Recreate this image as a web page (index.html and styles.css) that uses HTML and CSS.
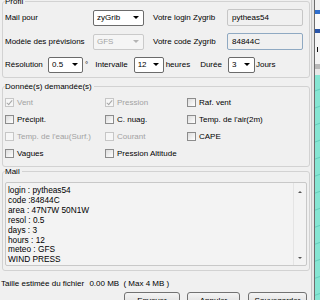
FILE: index.html
```html
<!DOCTYPE html>
<html lang="fr">
<head>
  <meta charset="UTF-8" />
  <title>Mail zyGrib</title>
  <link rel="stylesheet" href="styles.css">
</head>
<body>
  <div class="screen">
    <div class="dialog">
      <fieldset class="group profil">
        <legend>Profil</legend>
        <div class="profil-grid">
          <span>Mail pour</span>
          <div class="combo"><span>zyGrib</span><i class="arrow"></i></div>
          <span class="label2">Votre login Zygrib</span>
          <div class="field">pytheas54</div>

          <span>Modèle des prévisions</span>
          <div class="combo disabled"><span>GFS</span><i class="arrow"></i></div>
          <span class="label2">Votre code Zygrib</span>
          <div class="field focus">84844C</div>
        </div>
        <div class="timing">
          <span class="t-res">Résolution</span>
          <div class="combo c-res"><span>0.5</span><i class="arrow"></i></div>
          <span class="t-deg">°</span>
          <span class="t-int">Intervalle</span>
          <div class="combo c-int"><span>12</span><i class="arrow"></i></div>
          <span class="t-h">heures</span>
          <span class="t-dur">Durée</span>
          <div class="combo c-dur"><span>3</span><i class="arrow"></i></div>
          <span class="t-j">Jours</span>
        </div>
      </fieldset>

      <fieldset class="group data">
        <legend>Donnée(s) demandée(s)</legend>
        <div class="checks">
          <label class="check off"><i class="box on"></i>Vent</label>
          <label class="check off"><i class="box on"></i>Pression</label>
          <label class="check"><i class="box"></i>Raf. vent</label>

          <label class="check"><i class="box"></i>Précipit.</label>
          <label class="check"><i class="box"></i>C. nuag.</label>
          <label class="check"><i class="box"></i>Temp. de l'air(2m)</label>

          <label class="check off"><i class="box"></i>Temp. de l'eau(Surf.)</label>
          <label class="check off"><i class="box"></i>Courant</label>
          <label class="check"><i class="box"></i>CAPE</label>

          <label class="check"><i class="box"></i>Vagues</label>
          <label class="check wide"><i class="box"></i>Pression Altitude</label>
        </div>
      </fieldset>

      <fieldset class="group mail">
        <legend>Mail</legend>
        <div class="mailbox">
          <div class="mail-text">login : pytheas54
code :84844C
area : 47N7W 50N1W
resol : 0.5
days : 3
hours : 12
meteo : GFS
WIND PRESS</div>
          <div class="scroll"><i class="up"></i><i class="down"></i></div>
        </div>
      </fieldset>

      <div class="size-line">
        <span>Taille estimée du fichier</span>
        <span class="size-mb">0.00 MB</span>
        <span class="size-max">( Max 4 MB )</span>
      </div>

      <div class="buttons">
        <button class="b1">Envoyer</button>
        <button class="b2">Annuler</button>
        <button class="b3">Sauvegarder</button>
      </div>
    </div>

    <div class="frame"></div>

    <div class="map">
      <div class="m-top"></div>
      <div class="m-blue"></div>
      <div class="m-white"></div>
      <div class="m-navy"></div>
      <div class="m-light"></div>
      <div class="m-text"></div>
      <div class="m-light2"></div>
      <div class="m-grey"></div>
      <div class="m-light3"></div>
      <div class="sea"></div>
    </div>
  </div>
</body>
</html>
```

FILE: styles.css
```css
* {
  box-sizing: border-box;
}
html, body {
  margin: 0;
  height: 100%;
  overflow: hidden;
}
body {
  background: #f0f0f0;
  font-family: "Liberation Sans", Arial, sans-serif;
  font-size: 8px;
  color: #000;
}
.screen {
  display: flex;
  height: 300px;
}
.dialog {
  width: 311px;
  padding: 0 1px 0 2px;
  margin-top: -3px;
}

/* group boxes */
.group {
  margin: 0;
  min-width: 0;
  border: 1px solid #d2d2d2;
  border-radius: 3px;
  padding: 3px 2px 4px;
}
.group legend {
  padding: 0 2px 0 0;
  line-height: 9px;
}
.data {
  margin-top: 4px;
  padding-top: 3px;
}
.mail {
  margin-top: 0;
  padding-top: 6px;
}

/* profil */
.profil-grid {
  display: grid;
  grid-template-columns: 88px 51px 83px 76px;
  grid-auto-rows: 17px;
  row-gap: 7px;
  align-items: center;
}
.label2 {
  padding-left: 9px;
}
.combo {
  height: 16px;
  display: flex;
  align-items: center;
  justify-content: space-between;
  padding: 0 4px 0 3px;
  background: #fff;
  border: 1px solid #6b6b6b;
  border-radius: 2px;
}
.combo.disabled {
  background: #f5f5f5;
  border-color: #cacaca;
  color: #a4a4a4;
}
.arrow {
  width: 0;
  height: 0;
  border-left: 3px solid transparent;
  border-right: 3px solid transparent;
  border-top: 3px solid #000;
}
.disabled .arrow {
  border-top-color: #b4b4b4;
}
.field {
  height: 17px;
  display: flex;
  align-items: center;
  padding-left: 4px;
  background: #f0f0f0;
  border: 1px solid #c6c6c6;
  border-radius: 2px;
}
.field.focus {
  border-color: #8fa9c2;
}

.timing {
  display: flex;
  align-items: center;
  height: 17px;
  margin-top: 6px;
}
.t-res { width: 43px; }
.c-res { width: 35px; }
.t-deg { margin-left: 2px; }
.t-int { margin-left: 7px; }
.c-int { width: 30px; margin-left: 6px; }
.t-h { margin-left: 2px; }
.t-dur { margin-left: 10px; }
.c-dur { width: 27px; margin-left: 6px; }
.t-j { margin-left: 1px; }

/* checkboxes */
.checks {
  display: grid;
  grid-template-columns: 100px 82px 1fr;
  grid-auto-rows: 17px;
  align-items: center;
}
.check {
  display: flex;
  align-items: center;
  gap: 3px;
  white-space: nowrap;
}
.check.wide {
  grid-column: span 2;
}
.box {
  width: 9px;
  height: 9px;
  border: 1px solid #8c8c8c;
  background: linear-gradient(135deg, #dcdcdc, #fff);
  position: relative;
}
.check.off {
  color: #a2a2a2;
}
.check.off .box {
  border-color: #c6c6c6;
  background: #f6f6f6;
}
.box.on::after {
  content: "";
  position: absolute;
  left: 2px;
  top: 0;
  width: 2px;
  height: 5px;
  border-right: 1px solid #a6a6a6;
  border-bottom: 1px solid #a6a6a6;
  transform: rotate(40deg);
}

/* mail */
.mailbox {
  display: flex;
  height: 84px;
  background: #f3f3f3;
  border: 1px solid #c8c8c8;
  border-radius: 2px;
}
.mail-text {
  flex: 1;
  padding: 3px 0 0 2px;
  font-size: 8.3px;
  line-height: 9.9px;
  white-space: pre;
}
.scroll {
  width: 13px;
  border-left: 1px solid #e4e4e4;
  display: flex;
  flex-direction: column;
  align-items: center;
  justify-content: space-between;
  padding: 8px 0 6px;
}
.scroll i {
  width: 0;
  height: 0;
  border-left: 2px solid transparent;
  border-right: 2px solid transparent;
}
.scroll .up {
  border-bottom: 2px solid #555;
}
.scroll .down {
  border-top: 2px solid #555;
}

.size-line {
  margin: 8px 0 0 -1px;
  line-height: 10px;
  white-space: nowrap;
}
.size-mb { margin-left: 3px; }
.size-max { margin-left: 2px; }

.buttons {
  display: flex;
  margin-top: 3px;
}
.buttons button {
  height: 17px;
  margin: 0;
  padding: 0;
  font-family: inherit;
  font-size: 8px;
  line-height: 15px;
  color: #000;
  background: linear-gradient(#f4f4f4, #e6e6e6 50%, #d9d9d9);
  border: 1px solid #727272;
  border-radius: 3px;
}
.b1 { width: 56px; margin-left: 122px !important; }
.b2 { width: 53px; margin-left: 7px !important; }
.b3 { width: 59px; margin-left: 8px !important; }

/* window edge and map behind */
.frame {
  width: 4px;
  background: #e6e6e6;
  border-left: 1px solid #c6c6c6;
  border-right: 1px solid #6c6c6c;
}
.map {
  flex: 1;
  display: flex;
  flex-direction: column;
}
.m-top { height: 10px; background: #f2f2f2; }
.m-blue { height: 4px; background: #2f6fce; }
.m-white { height: 15px; background: #fafafa; }
.m-navy { height: 4px; background: #2a55a8; }
.m-light { height: 14px; background: #f4f4f4; }
.m-text { height: 5px; background: linear-gradient(90deg, #f4f4f4 40%, #111 40%, #111 60%, #f4f4f4 60%); }
.m-light2 { height: 12px; background: #f4f4f4; }
.m-grey { height: 5px; background: #b9b9b9; }
.m-light3 { height: 6px; background: #e8e8e8; }
.sea {
  flex: 1;
  background: repeating-linear-gradient(160deg, #86e6d3 0, #86e6d3 14px, #66cfbc 15px, #86e6d3 16px);
}
```
